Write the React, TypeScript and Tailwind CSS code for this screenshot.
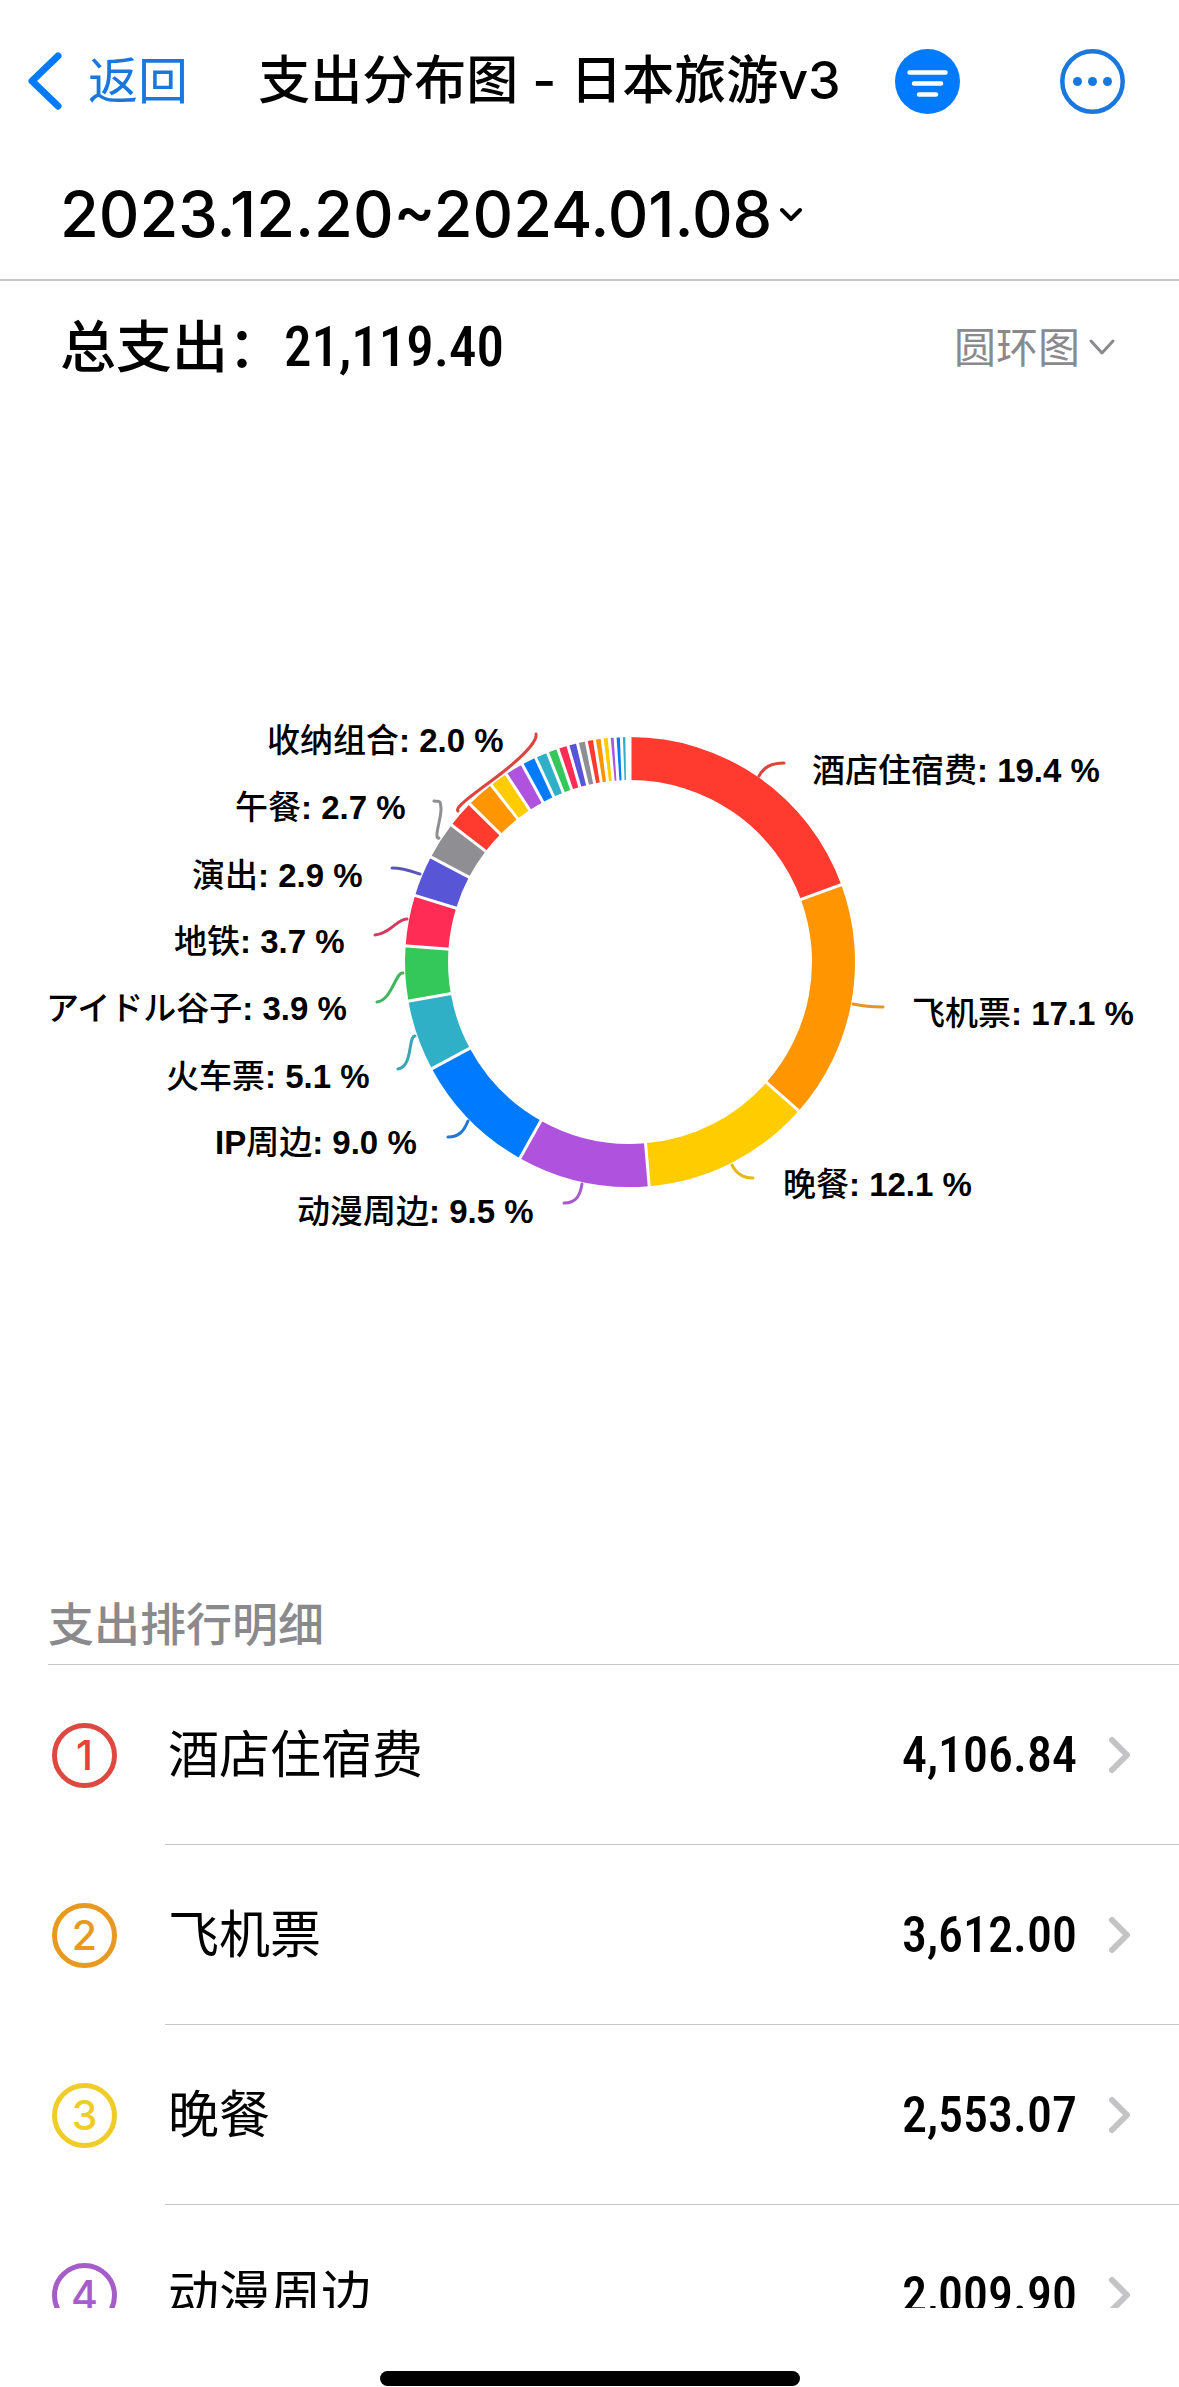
import { useState } from "react";

type Slice = {
  color: string;
  end: number; // clockwise angle from 12 o'clock, in degrees
};

type Label = {
  name: string;
  share: string;
  x: number;
  y: number;
  color: string;
  line: string;
};

type Expense = {
  name: string;
  amount: string;
  ring: string;
};

const RED = "#ff3b30";
const ORANGE = "#ff9500";
const YELLOW = "#ffcc00";
const PURPLE = "#af52de";
const BLUE = "#007aff";
const TEAL = "#30b0c7";
const GREEN = "#34c759";
const PINK = "#ff2d55";
const INDIGO = "#5856d6";
const GRAY = "#8e8e93";

const slices: Slice[] = [
  { color: RED, end: 69.9 },
  { color: ORANGE, end: 131.4 },
  { color: YELLOW, end: 175.1 },
  { color: PURPLE, end: 209.3 },
  { color: BLUE, end: 241.7 },
  { color: TEAL, end: 260 },
  { color: GREEN, end: 274.1 },
  { color: PINK, end: 287.2 },
  { color: INDIGO, end: 297.8 },
  { color: GRAY, end: 307.5 },
  { color: RED, end: 314.6 },
  { color: ORANGE, end: 321.9 },
  { color: YELLOW, end: 326.6 },
  { color: PURPLE, end: 331.4 },
  { color: BLUE, end: 335.2 },
  { color: TEAL, end: 338.5 },
  { color: GREEN, end: 341.3 },
  { color: PINK, end: 344 },
  { color: INDIGO, end: 346.5 },
  { color: GRAY, end: 348.8 },
  { color: RED, end: 350.9 },
  { color: ORANGE, end: 352.9 },
  { color: YELLOW, end: 354.7 },
  { color: PURPLE, end: 356.2 },
  { color: BLUE, end: 357.8 },
  { color: TEAL, end: 359.2 },
];

const labels: Label[] = [
  { name: "酒店住宿费", share: "19.4", x: 812, y: 402, color: "#d9453f", line: "M759 396C764 387 771 383 784 383" },
  { name: "飞机票", share: "17.1", x: 912, y: 645, color: "#e5962b", line: "M853 624C862 626 872 627 883 627" },
  { name: "晚餐", share: "12.1", x: 783, y: 816, color: "#e3b91d", line: "M732 785C736 793 742 798 753 798" },
  { name: "动漫周边", share: "9.5", x: 297, y: 843, color: "#a65cc9", line: "M582 804C580 816 576 823 564 823" },
  { name: "IP周边", share: "9.0", x: 215, y: 774, color: "#1f78d8", line: "M468 741C464 751 459 757 448 757" },
  { name: "火车票", share: "5.1", x: 166, y: 708, color: "#3ba5b5", line: "M415 656C408 656 413 687 398 689" },
  { name: "アイドル谷子", share: "3.9", x: 46, y: 640, color: "#43b45f", line: "M403 593C396 591 392 620 377 622" },
  { name: "地铁", share: "3.7", x: 174, y: 573, color: "#d63a62", line: "M407 539C398 538 390 554 375 555" },
  { name: "演出", share: "2.9", x: 192, y: 507, color: "#5a55bb", line: "M420 494C411 491 403 488 392 488" },
  { name: "午餐", share: "2.7", x: 235, y: 439, color: "#8e8e93", line: "M439 458C433 460 442 436 441 428S441 422 434 421" },
  { name: "收纳组合", share: "2.0", x: 267, y: 372, color: "#d9453f", line: "M458 431C453 427 488 404 503 392S538 362 536 354" },
];

const expenses: Expense[] = [
  { name: "酒店住宿费", amount: "4,106.84", ring: "border-[#dd4840] text-[#e8433b]" },
  { name: "飞机票", amount: "3,612.00", ring: "border-[#e8991f] text-[#e8991f]" },
  { name: "晚餐", amount: "2,553.07", ring: "border-[#efcc28] text-[#efcc28]" },
  { name: "动漫周边", amount: "2,009.90", ring: "border-[#a65cc9] text-[#a65cc9]" },
];

const CX = 630;
const CY = 582;
const OUTER = 225;
const INNER = 182;

function point(angle: number, radius: number) {
  const rad = (angle * Math.PI) / 180;
  return `${(CX + radius * Math.sin(rad)).toFixed(2)} ${(CY - radius * Math.cos(rad)).toFixed(2)}`;
}

function slicePath(start: number, end: number) {
  return `M${point(start, OUTER)}A${OUTER} ${OUTER} 0 0 1 ${point(end, OUTER)}L${point(end, INNER)}A${INNER} ${INNER} 0 0 0 ${point(start, INNER)}Z`;
}

export default function App() {
  const [chartType, setChartType] = useState("donut");

  return (
    <div
      lang="zh-CN"
      className="flex h-screen w-full flex-col bg-white font-['Inter','Noto_Sans_CJK_SC',sans-serif] text-black"
    >
      <header className="shrink-0 border-b-2 border-[#c6c6c8]">
        <div className="flex h-[162px] items-center pr-[54px] pl-7">
          <button type="button" className="flex items-center gap-[26px] text-[50px] leading-none text-[#1a78dc]">
            <svg width="34" height="58" viewBox="0 0 34 58" fill="none" stroke="#007aff" strokeWidth="7" strokeLinecap="round" strokeLinejoin="round">
              <path d="M30 4L4 29L30 54" />
            </svg>
            返回
          </button>
          <h1 className="flex-1 pl-4 text-center text-[52px] leading-none font-medium whitespace-nowrap">
            支出分布图 - 日本旅游v3
          </h1>
          <div className="flex items-center gap-[100px]">
            <button type="button" aria-label="筛选">
              <FilterIcon />
            </button>
            <button type="button" aria-label="更多">
              <MoreIcon />
            </button>
          </div>
        </div>
        <button type="button" className="flex h-[117px] items-center gap-2 pb-3 pl-[60px] text-[63px] leading-none font-medium">
          2023.12.20~2024.01.08
          <svg width="22" height="16" viewBox="0 0 22 16" fill="none" stroke="currentColor" strokeWidth="4" strokeLinecap="round" strokeLinejoin="round">
            <path d="M2 3L11 12L20 3" />
          </svg>
        </button>
      </header>

      <main className="flex min-h-0 flex-1 flex-col overflow-hidden">
        <div className="flex h-[132px] shrink-0 items-center justify-between pr-16 pl-[60px]">
          <p className="flex items-center text-[56px] leading-none font-medium">
            总支出：
            <span className="font-['Roboto_Condensed','Roboto',sans-serif] text-[55px]">21,119.40</span>
          </p>
          <div className="flex items-center gap-2 text-[#8a8a8e]">
            <select
              aria-label="图表类型"
              value={chartType}
              onChange={(e) => setChartType(e.target.value)}
              className="appearance-none bg-transparent text-[42px]"
            >
              <option value="donut">圆环图</option>
            </select>
            <svg width="26" height="18" viewBox="0 0 26 18" fill="none" stroke="currentColor" strokeWidth="3" strokeLinecap="round" strokeLinejoin="round">
              <path d="M2 3L13 15L24 3" />
            </svg>
          </div>
        </div>

        <DonutChart />

        <section>
          <h2 className="ml-12 border-b border-[#c6c6c8] pb-[14px] text-[46px] leading-[52px] font-medium text-[#8a8a8e]">
            支出排行明细
          </h2>
          <ul>
            {expenses.map((item, index) => (
              <li key={item.name}>
                <button type="button" className="flex w-full items-center pl-[52px] text-left">
                  <span
                    className={`flex size-[65px] shrink-0 items-center justify-center rounded-full border-5 text-[41px] leading-none font-medium ${item.ring}`}
                  >
                    {index + 1}
                  </span>
                  <span className="ml-12 flex h-[180px] flex-1 items-center border-b border-[#c6c6c8] pr-12 pl-[3px]">
                    <span className="flex-1 text-[51px] leading-none">{item.name}</span>
                    <span className="font-['Roboto_Condensed','Roboto',sans-serif] text-[50px] leading-none font-medium">
                      {item.amount}
                    </span>
                    <svg className="ml-8" width="22" height="38" viewBox="0 0 22 38" fill="none" stroke="#c4c4c6" strokeWidth="6" strokeLinecap="round" strokeLinejoin="round">
                      <path d="M3 4L18 19L3 34" />
                    </svg>
                  </span>
                </button>
              </li>
            ))}
          </ul>
        </section>
      </main>

      <footer className="flex h-[79px] shrink-0 items-end justify-center pb-px">
        <div className="h-[15px] w-[420px] rounded-full bg-black" />
      </footer>
    </div>
  );
}

function DonutChart() {
  return (
    <svg
      viewBox="0 33 1179 1185"
      role="img"
      aria-label="支出分布图"
      className="w-full shrink-0 font-['Liberation_Sans','Noto_Sans_CJK_SC',sans-serif] text-[33px] font-bold"
    >
      {slices.map((slice, index) => (
        <path
          key={slice.end}
          d={slicePath(index === 0 ? 0 : slices[index - 1].end, slice.end)}
          fill={slice.color}
        />
      ))}

      {/* white gaps between neighbouring slices */}
      {[0, ...slices.map((slice) => slice.end)].map((angle) => (
        <path
          key={angle}
          d={`M${point(angle, INNER - 2)}L${point(angle, OUTER + 2)}`}
          stroke="#fff"
          strokeWidth="3"
        />
      ))}

      {labels.map((label) => {
        // latin letters stay bold, the CJK part is one step lighter
        const latin = label.name.match(/^[A-Z]*/)?.[0] ?? "";

        return (
          <g key={label.name}>
            <path d={label.line} fill="none" stroke={label.color} strokeWidth="3" strokeLinecap="round" />
            <text x={label.x} y={label.y}>
              {latin}
              <tspan className="font-medium">{label.name.slice(latin.length)}</tspan>
              {`: ${label.share} %`}
            </text>
          </g>
        );
      })}
    </svg>
  );
}

function FilterIcon() {
  return (
    <svg width="65" height="65" viewBox="0 0 65 65" fill="none">
      <circle cx="32.5" cy="32.5" r="32.5" fill="#007aff" />
      <path d="M14.5 23.5H50.5M19 34.5H46M24 45.5H41" stroke="#fff" strokeWidth="4.5" strokeLinecap="round" />
    </svg>
  );
}

function MoreIcon() {
  return (
    <svg width="65" height="65" viewBox="0 0 65 65" fill="#1a78dc">
      <circle cx="32.5" cy="32.5" r="30.2" fill="none" stroke="#1a78dc" strokeWidth="4.5" />
      <circle cx="17.5" cy="32.5" r="4.5" />
      <circle cx="32.5" cy="32.5" r="4.5" />
      <circle cx="47.5" cy="32.5" r="4.5" />
    </svg>
  );
}
